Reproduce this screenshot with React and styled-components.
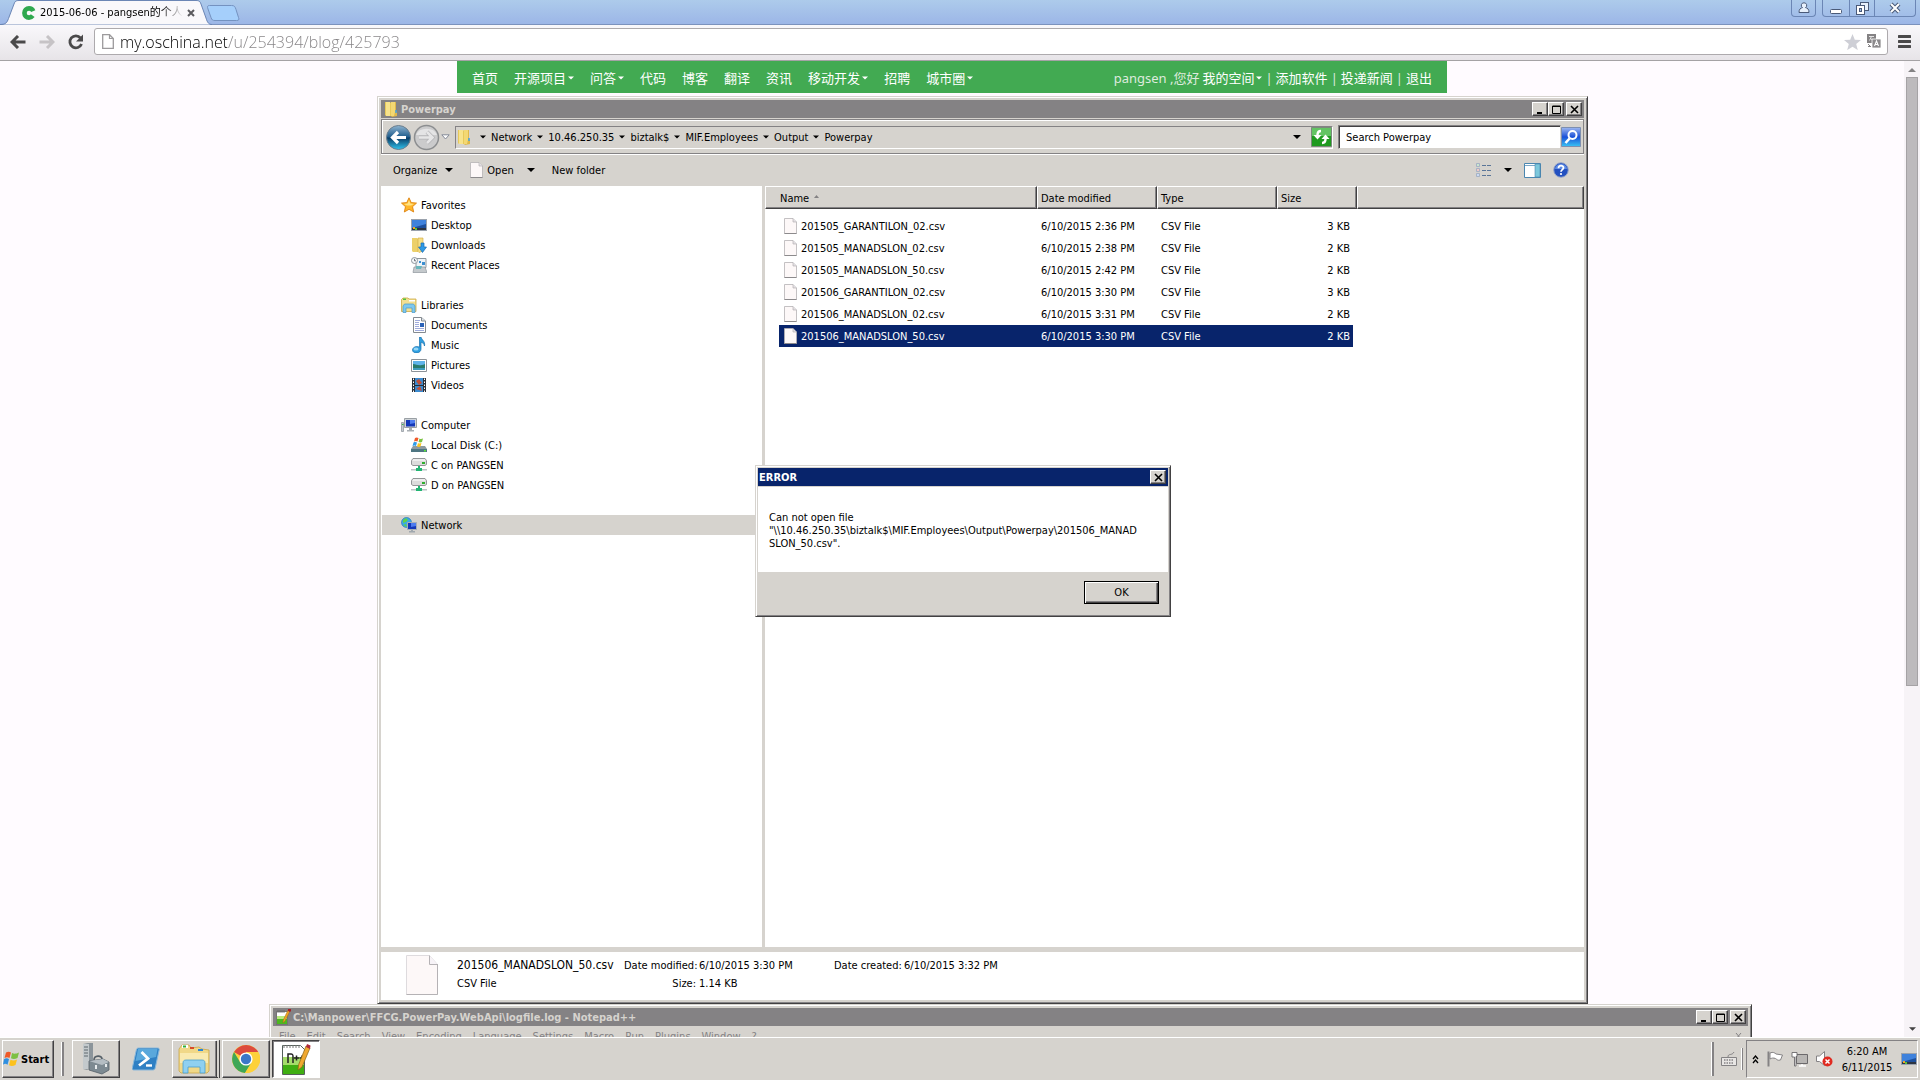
import React from "react";
import styled, { createGlobalStyle, css } from "styled-components";

const UI_FONT = `"DejaVu Sans Condensed", "Noto Sans", "Noto Sans CJK SC", sans-serif`;
const CJK_FONT = `"Noto Sans", "Noto Sans CJK SC", sans-serif`;

const face = "#d6d3ce";
const shadow = "#848284";
const dark = "#424142";
const navy = "#08246b";

const files = [
  ["201505_GARANTILON_02.csv", "6/10/2015 2:36 PM", "3 KB"],
  ["201505_MANADSLON_02.csv", "6/10/2015 2:38 PM", "2 KB"],
  ["201505_MANADSLON_50.csv", "6/10/2015 2:42 PM", "2 KB"],
  ["201506_GARANTILON_02.csv", "6/10/2015 3:30 PM", "3 KB"],
  ["201506_MANADSLON_02.csv", "6/10/2015 3:31 PM", "2 KB"],
  ["201506_MANADSLON_50.csv", "6/10/2015 3:30 PM", "2 KB"],
];

const siteLinks = [
  ["首页"],
  ["开源项目", true],
  ["问答", true],
  ["代码"],
  ["博客"],
  ["翻译"],
  ["资讯"],
  ["移动开发", true],
  ["招聘"],
  ["城市圈", true],
];

const crumbs = ["Network", "10.46.250.35", "biztalk$", "MIF.Employees", "Output", "Powerpay"];

const menus = ["File", "Edit", "Search", "View", "Encoding", "Language", "Settings", "Macro", "Run", "Plugins", "Window", "?"];

/* ---------- icons ---------- */

const Svg = ({ w = 16, h = 16, box, children }) => (
  <svg width={w} height={h} viewBox={box || `0 0 ${w} ${h}`} aria-hidden="true">
    {children}
  </svg>
);

const Arrow = ({ color = "#000", w = 7 }) => (
  <Svg w={w} h={4} box="0 0 8 4">
    <path d="M0 0h8L4 4z" fill={color} />
  </Svg>
);

const FolderIcon = () => (
  <Svg>
    <path d="M2 1h5l1 1v13H3l-1-1z" fill="#e7c95a" />
    <path d="M3 1h4v14H3z" fill="#f7e38c" />
    <path d="M8 1h5v9l1 1v4l-5 1-1-1z" fill="#dfb84a" />
    <path d="M8 1h4v10l-1 4H8z" fill="#f3d873" />
    <path d="M13 9v3" stroke="#3aa0e8" strokeWidth="1.4" />
  </Svg>
);

const PageIcon = ({ w = 13, h = 16 }) => (
  <Svg w={w} h={h} box="0 0 13 16">
    <path d="M.5.5H9L12.500 4v11.500H.5z" fill="#fdf8f8" stroke="#b5b2b5" strokeWidth=".8" />
    <path d="M9 .5V4h3.500" fill="#e4e0e4" stroke="#b5b2b5" strokeWidth=".7" />
    <path d="M.5 15.500h12" stroke="#8c8a8c" />
  </Svg>
);

const LargePageIcon = () => (
  <Svg w={32} h={40}>
    <path d="M.5.5h23l8 9v30H.5z" fill="#fdf8f8" stroke="#dedbde" />
    <path d="M23.500.5v9h8" fill="#f7f3f7" stroke="#b5b2b5" />
    <path d="M31.500 9v30.500H.5" fill="none" stroke="#b5b2b5" />
  </Svg>
);

const StarIcon = () => (
  <Svg>
    <path d="M8 .8l2.200 4.800 5.300.5-4 3.600 1.200 5.300L8 12.300 3.300 15l1.200-5.300-4-3.600 5.300-.5z" fill="#ffb629" stroke="#de8210" strokeWidth=".9" />
    <path d="M8 3l1.400 3.500 3.600.4-3 1.500-4 0-3-1.500 3.600-.4z" fill="#ffe384" />
  </Svg>
);

const DesktopIcon = () => (
  <Svg>
    <rect x=".5" y="2.500" width="15" height="11" fill="#1c4f9c" stroke="#9aa2ad" />
    <path d="M1 3h14v4L1 11z" fill="#3f82dc" />
    <path d="M1 11h14v2H1z" fill="#2c3442" />
    <path d="M2 10h2v2H2z" fill="#f5a623" />
    <path d="M4 11h2v2H4z" fill="#58c13a" />
  </Svg>
);

const DownloadsIcon = () => (
  <Svg>
    <path d="M1 1h5l1 1v13H2l-1-1z" fill="#ecd06a" />
    <path d="M7 1h5v13l-4 1.500-1-1z" fill="#f5df86" stroke="#d0a73c" strokeWidth=".6" />
    <path d="M10 6h3v4h2.500L11.500 15.500 7.500 10H10z" fill="#2e9ae6" stroke="#176cb5" strokeWidth=".7" />
  </Svg>
);

const RecentIcon = () => (
  <Svg>
    <path d="M5 1.500h10v9H5z" fill="#eef4f8" stroke="#8f979d" />
    <path d="M8 4h2v2H8zM11 5h3v3h-3z" fill="#3c8fd0" />
    <path d="M3 10h11l2 5.500H2z" fill="#c4c9cc" stroke="#8f979d" strokeWidth=".7" />
    <path d="M5 9h6l-1 3H5z" fill="#69b7bd" />
    <circle cx="3.500" cy="3.500" r="3" fill="#f5f8fa" stroke="#8f979d" />
    <path d="M3.500 1.800v2H5" fill="none" stroke="#4a5560" strokeWidth=".8" />
  </Svg>
);

const LibrariesIcon = () => (
  <Svg>
    <path d="M.5 2.500L2 1h5l1 1h7v12.500H.5z" fill="#f3df92" stroke="#cda944" strokeWidth=".8" />
    <path d="M2 1.500h3v1.500H2z" fill="#53c23b" />
    <path d="M8 3h6v1.500H8z" fill="#fff" />
    <path d="M2 15.500V9l1.500-2h9L14 9v6.500h-3V11H5v4.500z" fill="#7fc8ee" stroke="#4899c9" strokeWidth=".7" />
  </Svg>
);

const DocumentIcon = () => (
  <Svg>
    <path d="M2.500.5h8L14.500 4v11.500h-12z" fill="#fff" stroke="#848a90" />
    <path d="M10.500.5V4h4" fill="#dde3e8" stroke="#848a90" />
    <path d="M4 3.500h5M4 5.500h4M4 7.500h4M4 9.500h4M4 11.500h9M4 13.500h9" stroke="#a0acdc" />
    <path d="M9 6h4v4H9z" fill="#2a62b8" />
  </Svg>
);

const MusicIcon = () => (
  <Svg>
    <path d="M8.500 0h1.500c.5 3 4.500 4 3.500 9-.5-2.500-2-3.500-3.500-3.800V12c0 5-8.500 5-8.500 1 0-3 4.500-4.500 7-2.800z" fill="#2f9fe0" stroke="#1670ae" strokeWidth=".7" />
    <ellipse cx="5" cy="12" rx="2.500" ry="1.500" fill="#94d6f7" />
  </Svg>
);

const PictureIcon = () => (
  <Svg>
    <path d="M.5 2.500h15v12H.5z" fill="#fff" stroke="#8c9298" />
    <path d="M2 4h12v9H2z" fill="#5fb3ea" />
    <path d="M2 7c4 0 5 3 12 0v6H2z" fill="#287a6c" />
    <path d="M2 11h12v2H2z" fill="#3d9bbd" />
  </Svg>
);

const VideoIcon = () => (
  <Svg>
    <path d="M1 1h14v14H1z" fill="#2a2f38" />
    <path d="M4 1h8v7H4zM4 9h8v6H4z" fill="#3b8bd0" />
    <path d="M5 4l3-2 3 4-3 2zM5 12l4-3 2 5z" fill="#c0503a" />
    <path d="M2.500 1.500v14M13.500 1.500v14" stroke="#fff" strokeDasharray="1.500 1.500" />
  </Svg>
);

const ComputerIcon = () => (
  <Svg>
    <path d="M.5 5.500h2v9h-2z" fill="#c4cbd0" stroke="#8a9198" strokeWidth=".7" />
    <path d="M1 7.500h1.500" stroke="#39b54a" />
    <path d="M3.500 1.500h12v9h-12z" fill="#cfd4d8" stroke="#9aa0a5" />
    <path d="M5 3h9v6.500H5z" fill="#1438b8" />
    <path d="M9 3h5v3L9 7z" fill="#4d7cf0" />
    <path d="M8 11h3v2h2v1.500H6V13h2z" fill="#a9afb4" />
  </Svg>
);

const LocalDiskIcon = () => (
  <Svg>
    <path d="M2 9h12l2 3v3H0v-3z" fill="#8e9aa0" />
    <path d="M0 12h16v3H0z" fill="#4f7682" />
    <path d="M13 13h2v1.500h-2z" fill="#5ae03a" />
    <path d="M4 1c1.500-1 2.500-.5 3.500 0L6.500 4.500c-1-.6-2-.8-3.500 0z" fill="#f0592a" />
    <path d="M8.500 1.500c1.200.8 2.200.5 3.500 0L11 5c-1.300.6-2.200.4-3.500 0z" fill="#7cc242" />
    <path d="M2.500 5.500c1.500-.8 2.500-.5 3.500 0L5 9c-1-.6-2-.8-3.500 0z" fill="#2f9be8" />
    <path d="M7 6c1.200.8 2.200.5 3.500 0l-1 3.500c-1.200.6-2.200.4-3.500 0z" fill="#fdc51f" />
  </Svg>
);

const NetDriveIcon = () => (
  <Svg>
    <path d="M2 1.500h12l1.500 2v4l-1.500 1H2l-1.500-1v-4z" fill="#dcdcdc" stroke="#8a8c8e" strokeWidth=".9" />
    <path d="M2 3h12" stroke="#fff" />
    <path d="M11 5h3v2h-3z" fill="#2fae2f" />
    <path d="M7 9h2v2h2v3H5v-3h2z" fill="#22b573" />
    <path d="M0 12h5v1.500H0zM11 12h5v1.500h-5z" fill="#b9c4c4" />
  </Svg>
);

const NetworkIcon = () => (
  <Svg>
    <circle cx="5.500" cy="5.500" r="5" fill="#3aa9e8" stroke="#1b6fb0" strokeWidth=".6" />
    <path d="M2 3l3-2 2 2-2 2-3 1zM2 8l3-1 1 3z" fill="#5fd24b" />
    <path d="M6.500 5.500h9v7h-9z" fill="#1438b8" stroke="#a6afb8" />
    <path d="M10 6h5v3l-5 1z" fill="#4d7cf0" />
    <path d="M10 13h2v1h2v1.500H8V14h2z" fill="#a0a8ae" />
  </Svg>
);

const NotepadIcon = () => (
  <Svg>
    <path d="M1.500 2.500h11v13h-11z" fill="#fff" stroke="#555" strokeWidth=".7" />
    <path d="M2 7h10v8H2z" fill="#4cb81e" />
    <path d="M2 7h10v3H2z" fill="#b7ea7d" />
    <path d="M3 1v3M5 1v3M7 1v3M9 1v3" stroke="#666" strokeWidth=".8" />
    <path d="M13 1l2 1-5 10-2 2 .3-3z" fill="#f2a51f" stroke="#9b6a18" strokeWidth=".5" />
    <path d="M13 0h3v2l-1 1-2-1z" fill="#a8202a" />
  </Svg>
);

const CaptionGlyph = ({ kind }) => (
  <Svg w={9} h={9}>
    {kind === "min" && <path d="M1 8h5" stroke="#000" strokeWidth="2" />}
    {kind === "max" && <path d="M.5 1h8v7.500h-8zM.5 1.500h8" fill="none" stroke="#000" />}
    {kind === "close" && <path d="M1 1l7 7M8 1L1 8" stroke="#000" strokeWidth="1.600" />}
  </Svg>
);

const treeGroups = [
  { name: "Favorites", icon: <StarIcon />, items: [["Desktop", <DesktopIcon />], ["Downloads", <DownloadsIcon />], ["Recent Places", <RecentIcon />]] },
  { name: "Libraries", icon: <LibrariesIcon />, items: [["Documents", <DocumentIcon />], ["Music", <MusicIcon />], ["Pictures", <PictureIcon />], ["Videos", <VideoIcon />]] },
  { name: "Computer", icon: <ComputerIcon />, items: [["Local Disk (C:)", <LocalDiskIcon />], ["C on PANGSEN", <NetDriveIcon />], ["D on PANGSEN", <NetDriveIcon />]] },
  { name: "Network", icon: <NetworkIcon />, items: [], active: true },
];

/* ---------- browser ---------- */

const Browser = () => (
  <BrowserFrame>
    <TabStrip>
      <Tab>
        <TabShape viewBox="0 0 212 25" preserveAspectRatio="none">
          <path d="M0 24.500c6 0 7-2 8.500-6L14 4c1-3 2-3.500 5-3.500h177c3 0 4 .5 5 3.500l5 14c1.500 5 3 6.500 6 6.500" fill="#f9f8fb" stroke="#6b86b5" />
        </TabShape>
        <Svg w={14} h={14}>
          <circle cx="7" cy="7" r="4.600" fill="none" stroke="#2fa84f" strokeWidth="4.600" strokeDasharray="23.500 6" strokeDashoffset="-2.800" />
        </Svg>
        <TabTitle>2015-06-06 - pangsen的个人</TabTitle>
        <PlainButton aria-label="Close tab">
          <Svg w={8} h={8}>
            <path d="M1 1l6 6M7 1L1 7" stroke="#5a5a5e" strokeWidth="2" />
          </Svg>
        </PlainButton>
      </Tab>
      <NewTab aria-label="New tab">
        <Svg w={34} h={17}>
          <path d="M2.500.5h22c3 0 3.500 1 4.500 4l2.500 8c.8 2 .5 3-2 3H8c-2.500 0-3-.5-4-3L1 4C0 1.500.5.5 2.500.5z" fill="#a5cffb" stroke="#7492c0" />
        </Svg>
      </NewTab>
      <ChromeUser aria-label="User">
        <Svg w={12} h={12}>
          <path d="M6 .8a2.600 2.600 0 0 1 1.500 4.800c2 .5 3.500 1.500 3.500 4.900H1c0-3.400 1.500-4.400 3.500-4.900A2.600 2.600 0 0 1 6 .8z" fill="#e7f0fb" stroke="#4a5a78" />
        </Svg>
      </ChromeUser>
      <ChromeControls>
        <ChromeButton $w={26} aria-label="Minimize">
          <Svg w={12} h={14}>
            <rect x=".5" y="8.500" width="11" height="4" rx="1" fill="#fff" stroke="#4a5a78" />
          </Svg>
        </ChromeButton>
        <ChromeButton $w={25} aria-label="Restore">
          <Svg w={13} h={13}>
            <rect x="4.500" y=".5" width="8" height="8" fill="#e7f0fb" stroke="#4a5a78" />
            <rect x=".5" y="3.500" width="8" height="9" fill="#fff" stroke="#4a5a78" />
            <rect x="3.500" y="6.500" width="2" height="3" fill="#a5bfe6" stroke="#4a5a78" />
          </Svg>
        </ChromeButton>
        <ChromeButton $w={41} aria-label="Close">
          <Svg w={12} h={12}>
            <path d="M2 2l8 8M10 2l-8 8" stroke="#4a5a78" strokeWidth="4" />
            <path d="M2 2l8 8M10 2l-8 8" stroke="#fff" strokeWidth="2" />
          </Svg>
        </ChromeButton>
      </ChromeControls>
    </TabStrip>

    <AddressRow>
      <PlainButton aria-label="Back">
        <Svg w={16} h={14}>
          <path d="M15.500 7H2M8 1L2 7l6 6" fill="none" stroke="#4a494a" strokeWidth="3" />
        </Svg>
      </PlainButton>
      <PlainButton aria-label="Forward">
        <Svg w={16} h={14}>
          <path d="M.5 7H14M8 1l6 6-6 6" fill="none" stroke="#c6c3c6" strokeWidth="3" />
        </Svg>
      </PlainButton>
      <PlainButton aria-label="Reload">
        <Svg w={16} h={16}>
          <path d="M12.500 4A6 6 0 1 0 13.500 10" fill="none" stroke="#4a494a" strokeWidth="2.800" />
          <path d="M15 .5v7H8z" fill="#4a494a" />
        </Svg>
      </PlainButton>
      <UrlBox>
        <Svg w={12} h={15}>
          <path d="M.7.7h6.800l3.800 3.800v9.800H.7z" fill="#fff" stroke="#9c9a9c" strokeWidth="1.300" />
          <path d="M7.500.7v3.800h3.800" fill="none" stroke="#9c9a9c" strokeWidth="1.200" />
        </Svg>
        <UrlInput aria-label="Address" defaultValue="my.oschina.net/u/254394/blog/425793" />
        <Svg w={17} h={16}>
          <path d="M8.500 0l2.300 5.700 6.200.4-4.800 4 1.600 6-5.300-3.400-5.300 3.400 1.600-6L0 6.100l6.200-.4z" fill="#cecfd6" />
        </Svg>
        <Svg w={14} h={15}>
          <path d="M0 0h9v9H0z" fill="#848284" />
          <path d="M2 2.500h5M4.500 2.500L2.500 6.500M3 4l4 3" stroke="#e4e4e4" />
          <path d="M5 5h9v9H5z" fill="#8c8a8c" stroke="#fff" strokeWidth=".8" />
          <path d="M7.500 12l2-5 2 5M8 10.500h3" fill="none" stroke="#fff" strokeWidth="1.100" />
          <path d="M1 10l3 3M1 12.500h2" stroke="#848284" />
        </Svg>
      </UrlBox>
      <PlainButton aria-label="Menu">
        <Svg w={13} h={13}>
          <path d="M1 1.500h11M1 6.500h11M1 11.500h11" stroke="#4a494a" strokeWidth="3" strokeLinecap="round" />
        </Svg>
      </PlainButton>
    </AddressRow>

    <PageArea>
      <PageBody>
        <SiteBar>
          <SiteMenu>
            {siteLinks.map(([label, more]) => (
              <SiteLink href="#" key={label}>
                {label}
                {more && <Arrow color="#fff" w={6} />}
              </SiteLink>
            ))}
          </SiteMenu>
          <SiteUser>
            <SiteNote>pangsen ,您好</SiteNote>
            <SiteLink href="#">
              我的空间
              <Arrow color="#fff" w={6} />
            </SiteLink>
            <SiteNote>|</SiteNote>
            <SiteLink href="#">添加软件</SiteLink>
            <SiteNote>|</SiteNote>
            <SiteLink href="#">投递新闻</SiteLink>
            <SiteNote>|</SiteNote>
            <SiteLink href="#">退出</SiteLink>
          </SiteUser>
        </SiteBar>
      </PageBody>
      <ScrollTrack>
        <Svg w={8} h={4}>
          <path d="M0 4h8L4 0z" fill={shadow} />
        </Svg>
        <ScrollThumb />
        <ScrollRest />
        <Arrow color={dark} />
      </ScrollTrack>
    </PageArea>
  </BrowserFrame>
);

/* ---------- classic windows ---------- */

const WindowButtons = ({ only }) => (
  <ButtonGroup>
    {!only && (
      <>
        <CaptionButton aria-label="Minimize"><CaptionGlyph kind="min" /></CaptionButton>
        <CaptionButton aria-label="Maximize"><CaptionGlyph kind="max" /></CaptionButton>
      </>
    )}
    <CaptionButton $gap={!only} aria-label="Close"><CaptionGlyph kind="close" /></CaptionButton>
  </ButtonGroup>
);

const Explorer = () => (
  <ExplorerWindow>
    <TitleBar>
      <FolderIcon />
      <Caption>Powerpay</Caption>
      <WindowButtons />
    </TitleBar>

    <LocationBar>
      <TravelButtons>
        <RoundButton aria-label="Back">
          <Svg w={27} h={27}>
            <defs>
              <linearGradient id="travelBlue" x1="0" y1="0" x2="0" y2="1">
                <stop offset="0" stopColor="#8fb4d0" />
                <stop offset=".48" stopColor="#1e5c8c" />
                <stop offset=".52" stopColor="#0a3c66" />
                <stop offset="1" stopColor="#2fc4ee" />
              </linearGradient>
            </defs>
            <circle cx="13.500" cy="13.500" r="12" fill="url(#travelBlue)" stroke="#6a7d8c" />
            <path d="M21 13.500H8M13 8l-5.500 5.500L13 19" fill="none" stroke="#fff" strokeWidth="3.200" />
          </Svg>
        </RoundButton>
        <RoundButton aria-label="Forward">
          <Svg w={27} h={27}>
            <circle cx="13.500" cy="13.500" r="12" fill="#cbcbcc" stroke="#8c8e90" strokeWidth="1.500" />
            <path d="M3 11a11 9 0 0 1 21 0z" fill="#e4e4e5" />
            <path d="M6 13.500h13M14 8l5.500 5.500L14 19" fill="none" stroke="#b4b4b6" strokeWidth="4" />
            <path d="M6 13.500h13M14 8l5.500 5.500L14 19" fill="none" stroke="#e6e6e7" strokeWidth="2.600" />
          </Svg>
        </RoundButton>
        <PlainButton aria-label="Recent pages">
          <Svg w={9} h={6}>
            <path d="M.8.8h7.400L4.500 5z" fill="#fff" stroke="#848a98" />
          </Svg>
        </PlainButton>
      </TravelButtons>
      <CrumbBox>
        <FolderIcon />
        {crumbs.map((name) => (
          <Crumb key={name}>
            <Arrow w={6} />
            {name}
          </Crumb>
        ))}
        <CrumbEnd aria-label="Previous locations"><Arrow w={8} /></CrumbEnd>
        <PlainButton aria-label="Refresh">
          <Svg w={21} h={20}>
            <path d="M.5.5h20v19H.5z" fill="#1f9a1f" stroke="#7b8a7b" />
            <path d="M1 1h19v8H1z" fill="#63c463" />
            <path d="M10 4C7 4 6.500 6 6.500 8" fill="none" stroke="#fff" strokeWidth="2.400" />
            <path d="M2.500 8h8l-4 4.500z" fill="#fff" />
            <path d="M11 16c3 0 3.500-2 3.500-4" fill="none" stroke="#fff" strokeWidth="2.400" />
            <path d="M10.500 12h8l-4-4.500z" fill="#fff" />
          </Svg>
        </PlainButton>
      </CrumbBox>
      <SearchBox>
        <SearchInput aria-label="Search Powerpay" defaultValue="Search Powerpay" />
      </SearchBox>
      <PlainButton aria-label="Search">
        <Svg w={20} h={20}>
          <defs>
            <linearGradient id="searchBlue" x1="0" y1="0" x2="0" y2="1">
              <stop offset="0" stopColor="#9fb8f0" />
              <stop offset=".5" stopColor="#1a50d8" />
              <stop offset="1" stopColor="#38c4f4" />
            </linearGradient>
          </defs>
          <path d="M.5.5h19v19H.5z" fill="url(#searchBlue)" stroke="#7d8fb0" />
          <circle cx="11.500" cy="8" r="4" fill="none" stroke="#fff" strokeWidth="2" />
          <path d="M8.500 11.500L4.500 16" stroke="#fff" strokeWidth="2.600" />
        </Svg>
      </PlainButton>
    </LocationBar>

    <CommandBar>
      <Command>Organize<Arrow w={8} /></Command>
      <Command $icon><PageIcon />Open<Arrow w={8} /></Command>
      <Command>New folder</Command>
      <CommandEnd>
        <PlainButton aria-label="Change view">
          <Svg w={16} h={14}>
            <path d="M.5.500h3v3h-3zM.5 5.500h3v3h-3zM.5 10.500h3v3h-3z" fill="#fff" stroke="#94a4bc" strokeWidth=".8" />
            <path d="M1.500 1.500h1v1h-1z" fill="#2c9a3c" />
            <path d="M1.500 6.500h1v1h-1z" fill="#d02020" />
            <path d="M1.500 11.500h1v1h-1z" fill="#2c6ad0" />
            <path d="M6 2.500h9M6 7.500h9M6 12.500h9" stroke="#5a7598" strokeDasharray="4 1" />
          </Svg>
        </PlainButton>
        <PlainButton aria-label="More views"><Arrow w={8} /></PlainButton>
        <PlainButton aria-label="Preview pane">
          <Svg w={17} h={15}>
            <path d="M.5.500h16v14H.5z" fill="#fff" stroke="#4a86b0" />
            <path d="M1 2.500h10" stroke="#7ca8c8" />
            <path d="M11 1h5v13h-5z" fill="#7cc8dc" stroke="#4a86b0" strokeWidth=".6" />
          </Svg>
        </PlainButton>
        <PlainButton aria-label="Help">
          <Svg w={16} h={16}>
            <circle cx="8" cy="8" r="7.300" fill="#2350c0" stroke="#9aa8c8" />
            <path d="M2 7a6 5 0 0 1 12 0z" fill="#5c8ae4" />
            <path d="M5.500 6.200c0-3.400 5-3.200 5-.4C10.500 7.600 8 7.800 8 9.800" fill="none" stroke="#fff" strokeWidth="1.800" />
            <circle cx="8" cy="12" r="1.100" fill="#fff" />
          </Svg>
        </PlainButton>
      </CommandEnd>
    </CommandBar>

    <Panes>
      <TreePane>
        {treeGroups.map((group) => (
          <TreeGroup key={group.name}>
            <TreeRow $active={group.active}>{group.icon}{group.name}</TreeRow>
            {group.items.map(([name, icon]) => (
              <TreeRow $child key={name}>{icon}{name}</TreeRow>
            ))}
          </TreeGroup>
        ))}
      </TreePane>
      <ListPane>
        <FileTable>
          <colgroup>
            <Col $w={14} />
            <Col $w={258} />
            <Col $w={120} />
            <Col $w={120} />
            <Col $w={80} />
            <col />
          </colgroup>
          <thead>
            <tr>
              <HeadCell colSpan={2} $first>
                Name <SortMark />
              </HeadCell>
              <HeadCell>Date modified</HeadCell>
              <HeadCell>Type</HeadCell>
              <HeadCell>Size</HeadCell>
              <HeadCell aria-label="Empty" />
            </tr>
          </thead>
          <FileBody>
            {files.map(([name, date, size], i) => (
              <FileRow key={name} $selected={i === files.length - 1}>
                <td />
                <FileCell>
                  <FileName><PageIcon />{name}</FileName>
                </FileCell>
                <FileCell>{date}</FileCell>
                <FileCell>CSV File</FileCell>
                <SizeCell>{size}</SizeCell>
                <td />
              </FileRow>
            ))}
          </FileBody>
        </FileTable>
      </ListPane>
    </Panes>

    <DetailsPane>
      <LargePageIcon />
      <DetailGrid>
        <DetailName>201506_MANADSLON_50.csv</DetailName>
        <DetailLabel>Date modified:</DetailLabel>
        <span>6/10/2015 3:30 PM</span>
        <DetailLabel>Date created:</DetailLabel>
        <span>6/10/2015 3:32 PM</span>
        <span>CSV File</span>
        <DetailLabel>Size:</DetailLabel>
        <span>1.14 KB</span>
      </DetailGrid>
    </DetailsPane>
  </ExplorerWindow>
);

const SortMark = () => (
  <Svg w={5} h={3}>
    <path d="M0 3h5L2.500 0z" fill={shadow} />
  </Svg>
);

const NotepadWindow = () => (
  <Notepad>
    <TitleBar>
      <NotepadIcon />
      <Caption>C:\Manpower\FFCG.PowerPay.WebApi\logfile.log - Notepad++</Caption>
      <WindowButtons />
    </TitleBar>
    <MenuBar>
      {menus.map((m) => (
        <MenuItem key={m}>{m}</MenuItem>
      ))}
      <MenuClose aria-label="Close document">
        <Svg w={7} h={7}>
          <path d="M1 0l5 6M6 0L1 6" stroke={shadow} />
        </Svg>
      </MenuClose>
    </MenuBar>
  </Notepad>
);

const ErrorDialog = () => (
  <Dialog role="dialog" aria-labelledby="error-caption">
    <TitleBar $active>
      <Caption $active id="error-caption">ERROR</Caption>
      <WindowButtons only />
    </TitleBar>
    <Message>
      Can not open file
      <br />
      "\\10.46.250.35\biztalk$\MIF.Employees\Output\Powerpay\201506_MANAD
      <br />
      SLON_50.csv".
    </Message>
    <DialogFooter>
      <OkButton>OK</OkButton>
    </DialogFooter>
  </Dialog>
);

/* ---------- taskbar ---------- */

const TaskBar = () => (
  <Bar>
    <StartButton>
      <Svg w={17} h={16}>
        <path d="M3 1.500c2-1.200 3.500-1 5 0L6.500 7c-1.500-1-3-1.200-5 0z" fill="#ef5a28" />
        <path d="M9 2c2 1 4 1 7-.5L14.500 7c-2.500 1.200-4.500 1.200-6.500.3z" fill="#7cc042" />
        <path d="M1 8.200c2-1.200 3.500-1 5 0L4.500 13.700c-1.500-1-3-1.200-4.500 0z" fill="#2f8fe0" />
        <path d="M7.500 8.700c2 1 4 1 6.500-.2l-1.500 5.500c-2.500 1.200-4.500 1.200-6.500.3z" fill="#fdc21c" />
      </Svg>
      Start
    </StartButton>
    <Grip />
    <TaskList>
      <TaskButton aria-label="Server Manager">
        <Svg w={30} h={32}>
          <path d="M2 1l5-1h5v24l-6 3-4-1z" fill="#8c959b" />
          <path d="M2 1h6v25H2z" fill="#c3c9cc" />
          <path d="M3 4h4M3 7h4M3 10h4M3 13h4" stroke="#5f686e" />
          <path d="M8 18l14-2 6 3v8l-7 4-13-4z" fill="#7d8a92" stroke="#566068" strokeWidth=".8" />
          <path d="M8 18l14-2 6 3-7 3z" fill="#b4bdc3" />
          <path d="M13 17c0-5 8-5 8-1" fill="none" stroke="#566068" strokeWidth="1.600" />
          <path d="M15 22v4M25 21v3" stroke="#e8ecee" strokeWidth="2" />
        </Svg>
      </TaskButton>
      <TaskButton $flat aria-label="PowerShell">
        <Svg w={28} h={24}>
          <path d="M6.500 1h19c1.500 0 2 .8 1.700 2l-4 18c-.3 1.300-1 2-2.500 2h-19C.3 23 0 22 .3 21l4-18c.3-1.300 1-2 2.200-2z" fill="#2f80c4" stroke="#8ab8da" />
          <path d="M6 2h19.500L24 10 3.500 14z" fill="#5aa8dc" />
          <path d="M9.500 5l6.500 6.500-9 7" fill="none" stroke="#fff" strokeWidth="2.800" />
          <path d="M14 18.500h6" stroke="#fff" strokeWidth="2.400" />
        </Svg>
      </TaskButton>
      <TaskButton $stack aria-label="Windows Explorer">
        <Svg w={34} h={30}>
          <path d="M1 5l3-4h7l2 3 8-1 3 2 7 1v21l-2 2H3l-2-2z" fill="#f0d888" stroke="#c9a648" strokeWidth=".8" />
          <path d="M4 1h6v3H4z" fill="#fff" />
          <path d="M5 1.500h3v2H5z" fill="#2fae3a" />
          <path d="M12 3h4v2h-4z" fill="#d84a2a" />
          <path d="M20 5h5v2h-5z" fill="#2a86d8" />
          <path d="M2 9h28v10H2z" fill="#f9eab0" />
          <path d="M5 29V19c0-2 1-3 3-3h16c2 0 3 1 3 3v10h-5v-6H10v6z" fill="#8fd0f0" stroke="#4a9fce" strokeWidth=".8" />
        </Svg>
      </TaskButton>
      <TaskButton aria-label="Google Chrome">
        <Svg w={28} h={28}>
          <circle cx="14" cy="14" r="14" fill="#fdd13a" />
          <path d="M14 14L2 7a14 14 0 0 1 24.200 0H14z" fill="#dd4b3e" />
          <path d="M2 7a14 14 0 0 0 11 21l6.500-10.500L8 17z" fill="#3fa757" />
          <path d="M14 7h12.200A14 14 0 0 1 13 28l7-11z" fill="#fdd13a" />
          <circle cx="14" cy="14" r="6.600" fill="#fff" />
          <circle cx="14" cy="14" r="5.200" fill="#3b78c8" />
        </Svg>
      </TaskButton>
      <TaskButton $pressed aria-label="Notepad++">
        <Svg w={30} h={33}>
          <path d="M1.500 2.500h18l4 4v25h-22z" fill="#fff" stroke="#55605a" />
          <path d="M2 14h21v17H2z" fill="#a4dc6a" />
          <path d="M2 22h21v9H2z" fill="#3fae12" />
          <path d="M3 2v3M6 2v3M9 2v3M12 2v3M15 2v3M18 2v3" stroke="#777" />
          <path d="M7 20v-9h3c2 0 2 1 2 3v6M13 15h5M15.500 12.500v5M18.500 15h5M21 12.500v5" fill="none" stroke="#222" strokeWidth="1.500" />
          <path d="M25 3l4 2-8 19-4 3 .5-5z" fill="#f0a830" stroke="#8c6414" strokeWidth=".7" />
          <path d="M26 1l3.500 1.500L29 6l-4-2z" fill="#b02a3a" />
        </Svg>
      </TaskButton>
    </TaskList>
    <Grip />
    <PlainButton aria-label="Input language">
      <Svg w={16} h={16}>
        <path d="M.5 6.500h15v8H.5z" fill="#e8e6e4" stroke={shadow} />
        <path d="M3 9h10M3 12h10" stroke={shadow} strokeWidth="1.500" strokeDasharray="1.500 1" />
        <path d="M7 6c0-4 4-1 6-5" fill="none" stroke={shadow} />
      </Svg>
    </PlainButton>
    <TrayGroup>
      <ThinGrip />
      <Tray>
        <PlainButton aria-label="Show hidden icons">
          <Svg w={7} h={9}>
            <path d="M1 4l2.500-3L6 4M1 8l2.500-3L6 8" fill="none" stroke="#000" strokeWidth="1.300" />
          </Svg>
        </PlainButton>
        <Svg w={16} h={16}>
          <path d="M1.500.5v15" stroke={shadow} strokeWidth="2" />
          <path d="M3 2c3-1.500 5 0 6 1l6.500 1-2 5c-3 1-4-1-5-1.500-2-.8-4-.5-5.500.5z" fill="#fff" stroke={shadow} />
        </Svg>
        <Svg w={17} h={16}>
          <path d="M5.500 3.500h11v9h-11z" fill="#b8b6b4" stroke="#6b696b" />
          <path d="M8 15h7M11 13v2" stroke="#fff" strokeWidth="1.500" />
          <path d="M1 1.500h5v4H5V15H3.500V6H1z" fill="#fff" stroke="#6b696b" strokeWidth=".9" />
        </Svg>
        <Svg w={17} h={16}>
          <path d="M.5 5h3l5-4.500v14l-5-4h-3z" fill="#fff" stroke={shadow} />
          <circle cx="11.500" cy="10.500" r="5" fill="#e02a20" />
          <path d="M9.500 8.500l4 4M13.500 8.500l-4 4" stroke="#fff" strokeWidth="1.500" />
        </Svg>
        <Clock>
          6:20 AM
          <br />
          6/11/2015
        </Clock>
        <PlainButton aria-label="Show desktop"><DesktopIcon /></PlainButton>
      </Tray>
    </TrayGroup>
  </Bar>
);

const App = () => (
  <Screen>
    <GlobalStyle />
    <Desktop>
      <Browser />
      <NotepadWindow />
      <Explorer />
      <ErrorDialog />
    </Desktop>
    <TaskBar />
  </Screen>
);

/* ---------- styles ---------- */

const GlobalStyle = createGlobalStyle`
  * {
    box-sizing: border-box;
  }

  body {
    margin: 0;
    font-family: ${UI_FONT};
    font-size: 11px;
    line-height: 13px;
    color: #000;
  }

  button,
  input {
    margin: 0;
    padding: 0;
    border: 0;
    background: none;
    font: inherit;
    color: inherit;
  }

  svg {
    display: block;
    flex: none;
  }
`;

const raised = css`
  border: 1px solid;
  border-color: #fff ${dark} ${dark} #fff;
  box-shadow: inset -1px -1px 0 ${shadow};
`;

const Screen = styled.div`
  height: 100vh;
  display: flex;
  flex-direction: column;
  overflow: hidden;
`;

const Desktop = styled.main`
  position: relative;
  flex: 1;
  min-height: 0;
  overflow: hidden;
`;

const PlainButton = styled.button`
  display: flex;
  align-items: center;
  flex: none;
`;

const BrowserFrame = styled.section`
  height: 100%;
  display: flex;
  flex-direction: column;
  background: #fffbff;
`;

const TabStrip = styled.div`
  height: 25px;
  display: flex;
  align-items: flex-start;
  padding: 0 4px 0 0;
  background: linear-gradient(#adcbeb, #9cb6e7);
  border-bottom: 1px solid #7b92bd;
`;

const Tab = styled.div`
  position: relative;
  width: 212px;
  height: 25px;
  display: flex;
  align-items: center;
  padding: 0 18px 0 22px;
`;

const TabShape = styled.svg`
  position: absolute;
  inset: 0;
  width: 100%;
  height: 100%;

  & ~ * {
    position: relative;
  }
`;

const TabTitle = styled.span`
  flex: 1;
  margin: 0 4px;
  line-height: 18px;
  white-space: nowrap;
  mask-image: linear-gradient(to right, #000 85%, transparent);
`;

const NewTab = styled(PlainButton)`
  margin: 5px auto 0 -5px;
`;

const ChromeUser = styled.button`
  width: 25px;
  height: 17px;
  display: flex;
  align-items: center;
  justify-content: center;
  margin-right: 6px;
  border: 1px solid #6b86b5;
  border-top: 0;
  border-radius: 0 0 4px 4px;
`;

const ChromeControls = styled.div`
  display: flex;
  height: 17px;
  border: 1px solid #6b86b5;
  border-top: 0;
  border-radius: 0 0 4px 4px;
`;

const ChromeButton = styled.button`
  width: ${(p) => p.$w}px;
  display: flex;
  align-items: center;
  justify-content: center;

  & + & {
    border-left: 1px solid #6b86b5;
  }
`;

const AddressRow = styled.div`
  height: 36px;
  display: flex;
  align-items: center;
  gap: 13px;
  padding: 0 9px 2px 10px;
  background: linear-gradient(#f9f8fb, #e7e4e8);
  border-bottom: 1px solid #a5a2a5;
`;

const UrlBox = styled.div`
  flex: 1;
  height: 27px;
  display: flex;
  align-items: center;
  gap: 6px;
  margin: 0 -3px;
  padding: 0 6px 0 7px;
  background: #fff;
  border: 1px solid #adaaad;
  border-radius: 3px;
`;

const UrlInput = styled.input`
  flex: 1;
  min-width: 0;
  height: 22px;
  font-family: "Open Sans", sans-serif;
  font-size: 16px;
  font-weight: 300;
  color: transparent;
  background: linear-gradient(to right, #000 107px, ${shadow} 107px);
  background-clip: text;
  outline: none;
`;

const PageArea = styled.div`
  flex: 1;
  display: flex;
`;

const PageBody = styled.div`
  flex: 1;
`;

const SiteBar = styled.nav`
  max-width: 990px;
  height: 32px;
  display: flex;
  align-items: center;
  justify-content: space-between;
  margin: 0 auto;
  padding: 2px 15px 0;
  background: #42aa52;
  color: #fff;
  font-family: ${CJK_FONT};
  font-size: 13px;
  line-height: 18px;
  white-space: nowrap;
`;

const SiteMenu = styled.div`
  display: flex;
  gap: 16px;
`;

const SiteUser = styled.div`
  display: flex;
  gap: 3px;
`;

const SiteLink = styled.a`
  display: flex;
  align-items: center;
  gap: 2px;
  color: #fff;
  text-decoration: none;
`;

const SiteNote = styled.span`
  color: #deebde;
`;

const ScrollTrack = styled.div`
  width: 16px;
  display: flex;
  flex-direction: column;
  align-items: center;
  padding: 7px 0 6px;
  background: #f7f3f7;
`;

const ScrollThumb = styled.div`
  flex: 64 0 0;
  width: 12px;
  margin-top: 5px;
  background: #bdbabd;
  border: 1px solid #a5a2a5;
`;

const ScrollRest = styled.div`
  flex: 36 0 0;
`;

const windowFrame = css`
  position: absolute;
  display: flex;
  flex-direction: column;
  padding: 3px;
  background: ${face};
  border: 1px solid;
  border-color: ${face} ${dark} ${dark} ${face};
  box-shadow: inset 1px 1px 0 #fff, inset -1px -1px 0 ${shadow};
`;

const ExplorerWindow = styled.section`
  ${windowFrame}
  top: 96px;
  bottom: 33px;
  left: 377px;
  right: 332px;
`;

const Notepad = styled.section`
  ${windowFrame}
  top: calc(100% - 33px);
  left: 269px;
  right: 168px;
`;

const Dialog = styled.section`
  ${windowFrame}
  top: 465px;
  left: 755px;
  width: 416px;
  padding: 2px;
`;

const TitleBar = styled.header`
  height: 18px;
  flex: none;
  display: flex;
  align-items: center;
  gap: 2px;
  padding: 0 2px 0 ${(p) => (p.$active ? 1 : 2)}px;
  margin-bottom: 1px;
  background: ${(p) => (p.$active ? navy : shadow)};
`;

const Caption = styled.h1`
  margin: 0;
  padding-top: 1px;
  font-size: 11px;
  font-weight: bold;
  line-height: 15px;
  color: ${(p) => (p.$active ? "#fff" : face)};
  white-space: nowrap;
`;

const ButtonGroup = styled.div`
  display: flex;
  margin-left: auto;
`;

const CaptionButton = styled.button`
  ${raised}
  width: 16px;
  height: 14px;
  display: flex;
  align-items: center;
  justify-content: center;
  margin-left: ${(p) => (p.$gap ? 2 : 0)}px;
  background: ${face};
`;

const LocationBar = styled.div`
  height: 35px;
  flex: none;
  display: flex;
  align-items: center;
  padding: 1px 2px 0 3px;
  border: 1px solid ${shadow};
  box-shadow: inset 1px 1px 0 #fff, 0 1px 0 #fff;
`;

const TravelButtons = styled.div`
  display: flex;
  align-items: center;
  margin-right: 5px;
`;

const RoundButton = styled(PlainButton)`
  margin-right: 1px;
`;

const CrumbBox = styled.div`
  flex: 1;
  height: 23px;
  display: flex;
  align-items: center;
  margin-right: 5px;
  border: 1px solid;
  border-color: ${shadow} #fff #fff ${shadow};
`;

const Crumb = styled.span`
  display: flex;
  align-items: center;
  gap: 5px;
  margin-left: 5px;
  white-space: nowrap;

  &:nth-of-type(1) {
    margin-left: 8px;
  }
`;

const CrumbEnd = styled(PlainButton)`
  margin: 0 10px 0 auto;
`;

const SearchBox = styled.div`
  width: 223px;
  height: 24px;
  display: flex;
  padding: 0 7px;
  background: #fff;
  border: 1px solid;
  border-color: ${shadow} ${face} ${face} ${shadow};
  box-shadow: inset 1px 1px 0 ${dark};
`;

const SearchInput = styled.input`
  width: 100%;
  outline: none;
`;

const CommandBar = styled.div`
  height: 32px;
  flex: none;
  display: flex;
  align-items: center;
  gap: 17px;
  padding: 0 15px 0 12px;
`;

const Command = styled.button`
  display: flex;
  align-items: center;
  gap: ${(p) => (p.$icon ? 4 : 8)}px;
  white-space: nowrap;

  & svg:last-child {
    margin-left: ${(p) => (p.$icon ? 9 : 0)}px;
  }
`;

const CommandEnd = styled.div`
  display: flex;
  align-items: center;
  gap: 12px;
  margin-left: auto;
`;

const Panes = styled.div`
  flex: 1;
  min-height: 0;
  display: flex;
  background: #fff;
`;

const TreePane = styled.nav`
  flex: none;
  width: 384px;
  padding: 9px 0 0 1px;
  border-right: 3px solid ${face};
`;

const TreeGroup = styled.div`
  margin-bottom: 20px;
`;

const TreeRow = styled.div`
  height: 20px;
  display: flex;
  align-items: center;
  gap: 4px;
  padding-left: ${(p) => (p.$child ? 29 : 19)}px;
  background: ${(p) => (p.$active ? face : "transparent")};
`;

const ListPane = styled.div`
  flex: 1;
  min-width: 0;
`;

const FileTable = styled.table`
  width: 100%;
  table-layout: fixed;
  border-collapse: separate;
  border-spacing: 0;
`;

const Col = styled.col`
  width: ${(p) => p.$w}px;
`;

const HeadCell = styled.th`
  height: 23px;
  padding: 2px 0 0 ${(p) => (p.$first ? 14 : 3)}px;
  background: ${face};
  border: 1px solid;
  border-color: #fff ${dark} ${dark} #fff;
  box-shadow: inset -1px -1px 0 ${shadow};
  font-weight: normal;
  text-align: left;

  & svg {
    display: inline-block;
    margin: 0 0 4px 2px;
  }
`;

const FileBody = styled.tbody`
  &::before {
    content: "";
    display: block;
    height: 6px;
  }
`;

const FileCell = styled.td`
  height: 22px;
  padding: 0 0 0 4px;
  white-space: nowrap;
`;

const SizeCell = styled(FileCell)`
  padding: 0 3px 0 0;
  border-right: 4px solid #fff;
  text-align: right;
`;

const FileRow = styled.tr`
  color: ${(p) => (p.$selected ? "#fff" : "#000")};

  & ${FileCell}, & ${SizeCell} {
    background: ${(p) => (p.$selected ? navy : "transparent")};
  }
`;

const FileName = styled.span`
  display: flex;
  align-items: center;
  gap: 4px;
  padding-left: 1px;
`;

const DetailsPane = styled.footer`
  height: 53px;
  flex: none;
  display: flex;
  gap: 19px;
  padding: 3px 25px 0;
  background: #fff;
  border-top: 5px solid ${face};
`;

const DetailGrid = styled.div`
  display: grid;
  grid-template-columns: 166px 74px 134px 69px auto;
  grid-auto-rows: 18px;
  column-gap: 1px;
  align-items: center;
  padding-top: 1px;
  white-space: nowrap;
`;

const DetailName = styled.span`
  font-size: 12px;
`;

const DetailLabel = styled.span`
  padding-right: 2px;
  text-align: right;
`;

const MenuBar = styled.div`
  display: flex;
  gap: 11px;
  padding: 3px 6px;
  color: ${shadow};
`;

const MenuItem = styled.span`
  white-space: nowrap;
`;

const MenuClose = styled(PlainButton)`
  margin-left: auto;
`;

const Message = styled.p`
  margin: 0;
  min-height: 85px;
  padding: 24px 10px 0 11px;
  background: #fff;
  white-space: nowrap;
`;

const DialogFooter = styled.footer`
  height: 42px;
  display: flex;
  align-items: center;
  justify-content: flex-end;
  padding: 0 9px 2px 0;
`;

const OkButton = styled.button`
  width: 75px;
  height: 23px;
  border: 1px solid #000;
  box-shadow: inset 1px 1px 0 #fff, inset -1px -1px 0 ${dark}, inset -2px -2px 0 ${shadow};
`;

const Bar = styled.footer`
  height: 43px;
  flex: none;
  display: flex;
  align-items: center;
  gap: 7px;
  padding: 2px 2px 1px;
  background: ${face};
  box-shadow: inset 0 1px 0 #fff;
`;

const StartButton = styled.button`
  ${raised}
  width: 52px;
  height: 38px;
  display: flex;
  align-items: center;
  gap: 1px;
  font-weight: bold;
`;

const Grip = styled.div`
  width: 3px;
  height: 34px;
  border-left: 1px solid #fff;
  border-right: 2px solid ${shadow};
`;

const ThinGrip = styled.div`
  width: 2px;
  height: 22px;
  background: #fff;
  border-right: 1px solid ${shadow};
`;

const TaskList = styled.div`
  flex: 1;
  display: flex;
  gap: 2px;
  padding-left: 1px;
`;

const TaskButton = styled.button`
  ${raised}
  width: 48px;
  height: 38px;
  display: flex;
  align-items: center;
  justify-content: center;

  ${(p) =>
    p.$flat &&
    css`
      border-color: transparent;
      box-shadow: none;
    `}

  ${(p) =>
    p.$stack &&
    css`
      border-right: 4px double ${dark};
    `}

  ${(p) =>
    p.$pressed &&
    css`
      background: #fff;
      border-color: ${dark} #fff #fff ${dark};
      box-shadow: inset 1px 1px 0 ${shadow};
    `}
`;

const TrayGroup = styled.div`
  display: flex;
  align-items: center;
  gap: 3px;
  margin-left: -3px;
`;

const Tray = styled.div`
  height: 38px;
  display: flex;
  align-items: center;
  gap: 8px;
  padding: 0 0 0 5px;
  border: 1px solid;
  border-color: ${shadow} #fff #fff ${shadow};
`;

const Clock = styled.time`
  width: 52px;
  padding-top: 1px;
  line-height: 16px;
  text-align: center;
  white-space: nowrap;
`;

export default App;
